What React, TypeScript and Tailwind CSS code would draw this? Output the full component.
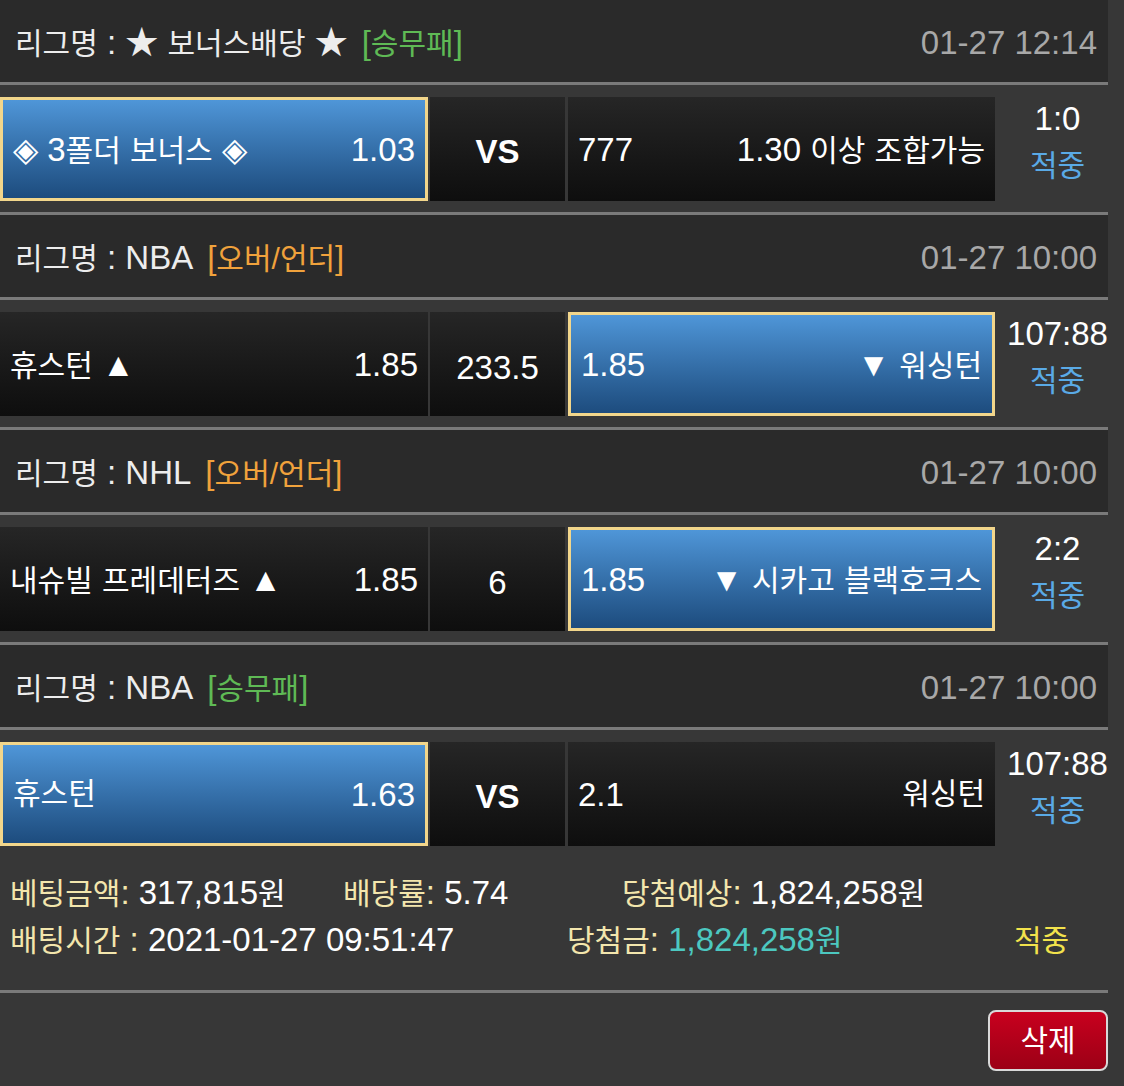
import React from "react";

const K = ({ children, className = "" }: { children: React.ReactNode; className?: string }) => (
  <span className={`text-[30px] ${className}`}>{children}</span>
);

const Line = () => <div className="h-[3px] bg-[#7a7a7a]" />;

function Header({ league, type, typeColor, time }: { league: React.ReactNode; type: string; typeColor: string; time: string }) {
  return (
    <div className="h-[82px] bg-[#2a2a2a] flex items-center justify-between pl-[15px] pr-[11px] pt-[3px]">
      <div className="text-[#ededed] text-[33px] leading-none flex items-baseline">
        <K>리그명</K>
        <span>&nbsp;:&nbsp;</span>
        {league}
        <span className={`ml-[14px] ${typeColor}`}>
          [<K>{type}</K>]
        </span>
      </div>
      <div className="text-[#a8a8a8] text-[33px] leading-none">{time}</div>
    </div>
  );
}

function Cell({
  selected,
  left,
  right,
  className = "",
}: {
  selected?: boolean;
  left: React.ReactNode;
  right: React.ReactNode;
  className?: string;
}) {
  return (
    <div
      className={`h-[104px] flex items-center justify-between px-[10px] text-white text-[33px] leading-none ${
        selected
          ? "bg-gradient-to-b from-[#4f96d8] to-[#1d4c7e] border-[3px] border-[#f2d68b]"
          : "bg-gradient-to-b from-[#262626] to-[#0e0e0e]"
      } ${className}`}
    >
      <div className="flex items-baseline whitespace-nowrap">{left}</div>
      <div className="flex items-baseline whitespace-nowrap">{right}</div>
    </div>
  );
}

function Row({
  home,
  center,
  away,
  score,
}: {
  home: { selected?: boolean; left: React.ReactNode; right: React.ReactNode };
  center: React.ReactNode;
  away: { selected?: boolean; left: React.ReactNode; right: React.ReactNode };
  score: string;
}) {
  return (
    <div className="h-[127px] pt-[12px] flex items-start">
      <Cell {...home} className="w-[428px]" />
      <div className="ml-[2px] w-[135px] h-[104px] bg-gradient-to-b from-[#262626] to-[#0e0e0e] flex items-center justify-center text-white text-[33px] leading-none">
        {center}
      </div>
      <Cell {...away} className="ml-[3px] w-[427px]" />
      <div className="flex-1 h-[104px] pl-[12px] flex flex-col items-center justify-center pb-[10px]">
        <div className="text-white text-[33px] leading-[47px]">{score}</div>
        <div className="text-[#5aaae6] leading-[47px]">
          <K>적중</K>
        </div>
      </div>
    </div>
  );
}

const VS = <span className="font-bold mt-[4px]">VS</span>;

export default function App() {
  return (
    <div className="min-h-screen w-full bg-[#373737] font-['Liberation_Sans','Noto_Sans_CJK_KR',sans-serif]">
      <div className="w-[1108px]">
        <Header
          league={
            <span className="flex items-baseline">
              ★&nbsp;<K>보너스배당</K>&nbsp;★
            </span>
          }
          type="승무패"
          typeColor="text-[#5fba55]"
          time="01-27 12:14"
        />
        <Line />
        <Row
          home={{
            selected: true,
            left: (
              <>
                ◈&nbsp;3<K>폴더</K>&nbsp;<K>보너스</K>&nbsp;◈
              </>
            ),
            right: "1.03",
          }}
          center={VS}
          away={{
            left: "777",
            right: (
              <>
                1.30&nbsp;<K>이상</K>&nbsp;<K>조합가능</K>
              </>
            ),
          }}
          score="1:0"
        />
        <Line />

        <Header league={<span>NBA</span>} type="오버/언더" typeColor="text-[#f0a23c]" time="01-27 10:00" />
        <Line />
        <Row
          home={{
            left: (
              <>
                <K>휴스턴</K>&nbsp;▲
              </>
            ),
            right: "1.85",
          }}
          center={<span className="mt-[6px]">233.5</span>}
          away={{
            selected: true,
            left: "1.85",
            right: (
              <>
                ▼&nbsp;<K>워싱턴</K>
              </>
            ),
          }}
          score="107:88"
        />
        <Line />

        <Header league={<span>NHL</span>} type="오버/언더" typeColor="text-[#f0a23c]" time="01-27 10:00" />
        <Line />
        <Row
          home={{
            left: (
              <>
                <K>내슈빌</K>&nbsp;<K>프레데터즈</K>&nbsp;▲
              </>
            ),
            right: "1.85",
          }}
          center={<span className="mt-[6px]">6</span>}
          away={{
            selected: true,
            left: "1.85",
            right: (
              <>
                ▼&nbsp;<K>시카고</K>&nbsp;<K>블랙호크스</K>
              </>
            ),
          }}
          score="2:2"
        />
        <Line />

        <Header league={<span>NBA</span>} type="승무패" typeColor="text-[#5fba55]" time="01-27 10:00" />
        <Line />
        <Row
          home={{ selected: true, left: <K>휴스턴</K>, right: "1.63" }}
          center={VS}
          away={{ left: "2.1", right: <K>워싱턴</K> }}
          score="107:88"
        />

        <div className="h-[133px] pt-[12px] pl-[10px] text-[33px] text-white">
          <div className="flex items-baseline h-[47px] leading-[47px] whitespace-nowrap">
            <div className="w-[333px]">
              <span className="text-[#f3e6ad]">
                <K>베팅금액</K>:
              </span>{" "}
              317,815<K>원</K>
            </div>
            <div className="w-[279px]">
              <span className="text-[#f3e6ad]">
                <K>배당률</K>:
              </span>{" "}
              5.74
            </div>
            <div>
              <span className="text-[#f3e6ad]">
                <K>당첨예상</K>:
              </span>{" "}
              1,824,258<K>원</K>
            </div>
          </div>
          <div className="flex items-baseline h-[47px] leading-[47px] whitespace-nowrap">
            <div className="w-[557px]">
              <span className="text-[#f3e6ad]">
                <K>배팅시간</K> :
              </span>{" "}
              2021-01-27 09:51:47
            </div>
            <div className="w-[447px]">
              <span className="text-[#f3e6ad]">
                <K>당첨금</K>:
              </span>{" "}
              <span className="text-[#4cc8c0]">
                1,824,258<K>원</K>
              </span>
            </div>
            <div className="text-[#f2e24c]">
              <K>적중</K>
            </div>
          </div>
        </div>
        <Line />
        <div className="h-[93px] pt-[17px] flex justify-end">
          <button className="w-[120px] h-[61px] rounded-[8px] border-2 border-[#d9d9d9] bg-gradient-to-b from-[#c8001e] to-[#9c0016] text-white flex items-center justify-center">
            <K>삭제</K>
          </button>
        </div>
      </div>
    </div>
  );
}
